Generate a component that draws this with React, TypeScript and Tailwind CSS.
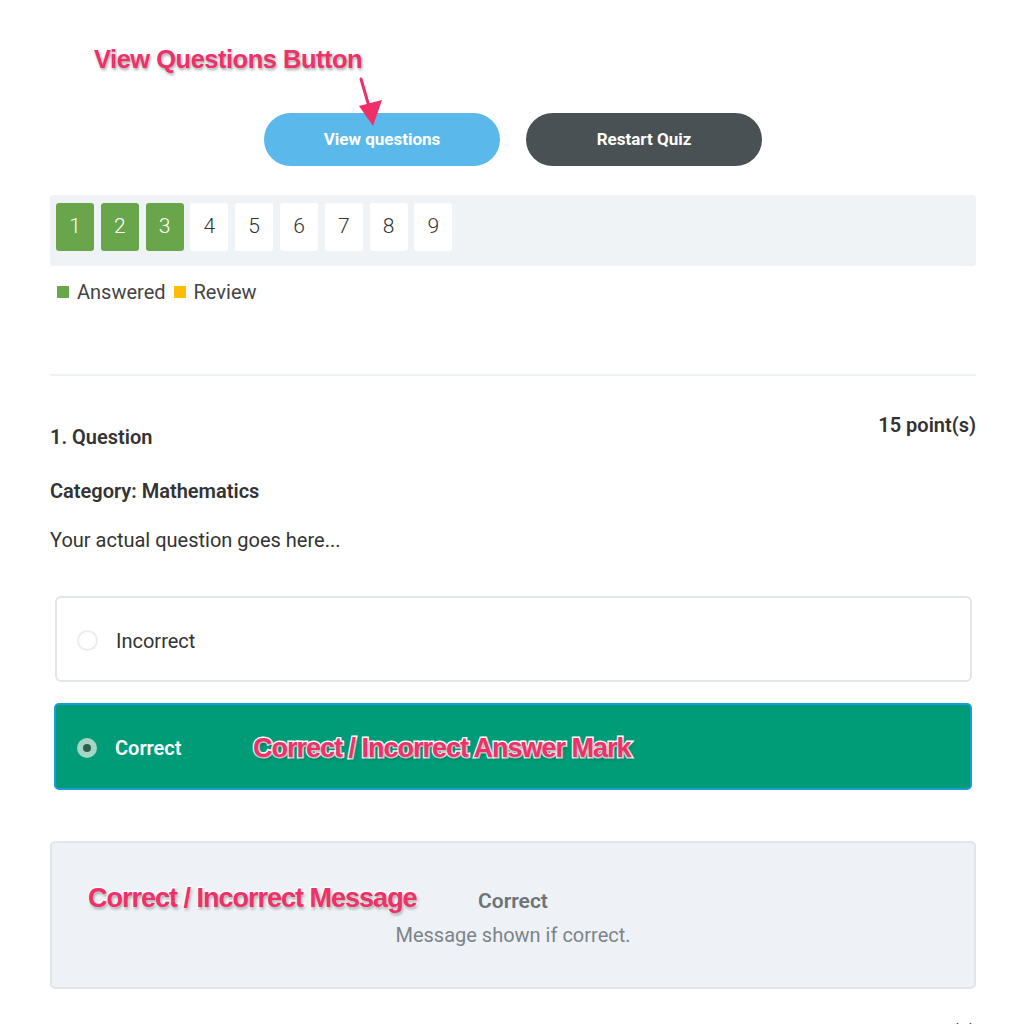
import React from "react";

const annot =
  "absolute font-bold text-[#f0306a] whitespace-nowrap [font-family:'Liberation_Sans',Arial,sans-serif] [paint-order:stroke_fill] [-webkit-text-stroke:3px_white] [text-shadow:1px_2px_3px_rgba(0,0,0,0.35)]";

export default function App() {
  const nums = [1, 2, 3, 4, 5, 6, 7, 8, 9];
  return (
    <div className="relative w-[1024px] h-[1024px] overflow-hidden bg-white [font-family:Roboto,'Liberation_Sans',sans-serif] text-[#333]">
      {/* annotations */}
      <div className={annot + " left-[94px] top-[42px] text-[26px] leading-[34px] tracking-[-0.5px] scale-x-[0.98] origin-left"}>
        View Questions Button
      </div>
      <svg className="absolute left-[350px] top-[76px]" width="40" height="54" viewBox="0 0 40 54">
        <line x1="11" y1="3" x2="20" y2="34" stroke="#ef2f6a" strokeWidth="3" strokeLinecap="round" />
        <polygon points="9,30 32,24 23,50" fill="#ef2f6a" />
      </svg>

      <div className="ml-[50px] w-[926px] pt-[113px]">
        {/* buttons */}
        <div className="flex justify-center gap-[26px]">
          <button className="w-[236px] h-[53px] rounded-full bg-[#5bb8ea] text-white font-bold text-[17px]">
            View questions
          </button>
          <button className="w-[236px] h-[53px] rounded-full bg-[#4a5154] text-white font-bold text-[17px]">
            Restart Quiz
          </button>
        </div>

        {/* pagination */}
        <div className="mt-[29px] h-[71px] bg-[#f0f3f6] rounded-[3px] pl-[6px] pt-[8px] flex gap-[6.8px]">
          {nums.map((n) => (
            <div
              key={n}
              className={
                "w-[38px] h-[48px] rounded-[3px] flex items-center justify-center text-[21px] font-light " +
                (n <= 3 ? "bg-[#69a54b] text-white" : "bg-white text-[#333]")
              }
            >
              {n}
            </div>
          ))}
        </div>

        {/* legend */}
        <div className="mt-[14px] flex items-center text-[20px] leading-[24px] text-[#444] pl-[7px]">
          <span className="w-[12px] h-[12px] bg-[#69a54b] mr-[8px]" />
          <span>Answered</span>
          <span className="w-[12px] h-[12px] bg-[#fbbd08] ml-[8px] mr-[8px]" />
          <span>Review</span>
        </div>

        <div className="mt-[70px] h-[2px] bg-[#eef2f2]" />

        {/* question header */}
        <div className="mt-[37px] flex justify-between">
          <div className="pt-[12px] text-[20px] leading-[24px] font-semibold text-[#333]">1. Question</div>
          <div className="text-[20px] leading-[24px] font-semibold text-[#333]">15 point(s)</div>
        </div>
        <div className="mt-[30px] text-[20px] leading-[24px] font-semibold text-[#333]">Category: Mathematics</div>
        <div className="mt-[25px] text-[20px] leading-[24px] text-[#333]">Your actual question goes here...</div>

        {/* options */}
        <div className="mt-[44px] ml-[5px] mr-[4px] h-[86px] border-2 border-[#e3e6e9] rounded-[6px] flex items-center pl-[20px] pt-[3px]">
          <span className="w-[21px] h-[21px] rounded-full border-2 border-[#ebedef] bg-white" />
          <span className="ml-[18px] text-[20px] text-[#333]">Incorrect</span>
        </div>
        <div className="relative mt-[21px] ml-[4px] mr-[4px] h-[87px] border-2 border-[#1b9bd7] bg-[#009b77] rounded-[5px] flex items-center pl-[21px] pt-[2px]">
          <span className="w-[20px] h-[20px] rounded-full bg-[#a4d6c6] flex items-center justify-center">
            <span className="w-[8px] h-[8px] rounded-full bg-[#2f5e50]" />
          </span>
          <span className="ml-[18px] text-[20px] font-semibold text-white">Correct</span>
          <div className={annot + " left-[197px] top-[26px] text-[27px] leading-[34px] tracking-[-1px]"}>
            Correct / Incorrect Answer Mark
          </div>
        </div>

        {/* message */}
        <div className="relative mt-[51px] h-[148px] border-2 border-[#e1e4e8] bg-[#eef1f5] rounded-[5px] flex flex-col items-center pt-[45px]">
          <div className="text-[21px] leading-[26px] font-semibold text-[#6b7479]">Correct</div>
          <div className="mt-[9px] text-[20px] leading-[24px] text-[#7b8489]">Message shown if correct.</div>
          <div className={annot + " left-[36px] top-[38px] text-[27px] leading-[34px] tracking-[-1px]"}>
            Correct / Incorrect Message
          </div>
        </div>

        <div className="mt-[31px] flex justify-end">
          <div className="text-[20px] leading-[24px] font-semibold text-[#333]">15 point(s)</div>
        </div>
      </div>
    </div>
  );
}
